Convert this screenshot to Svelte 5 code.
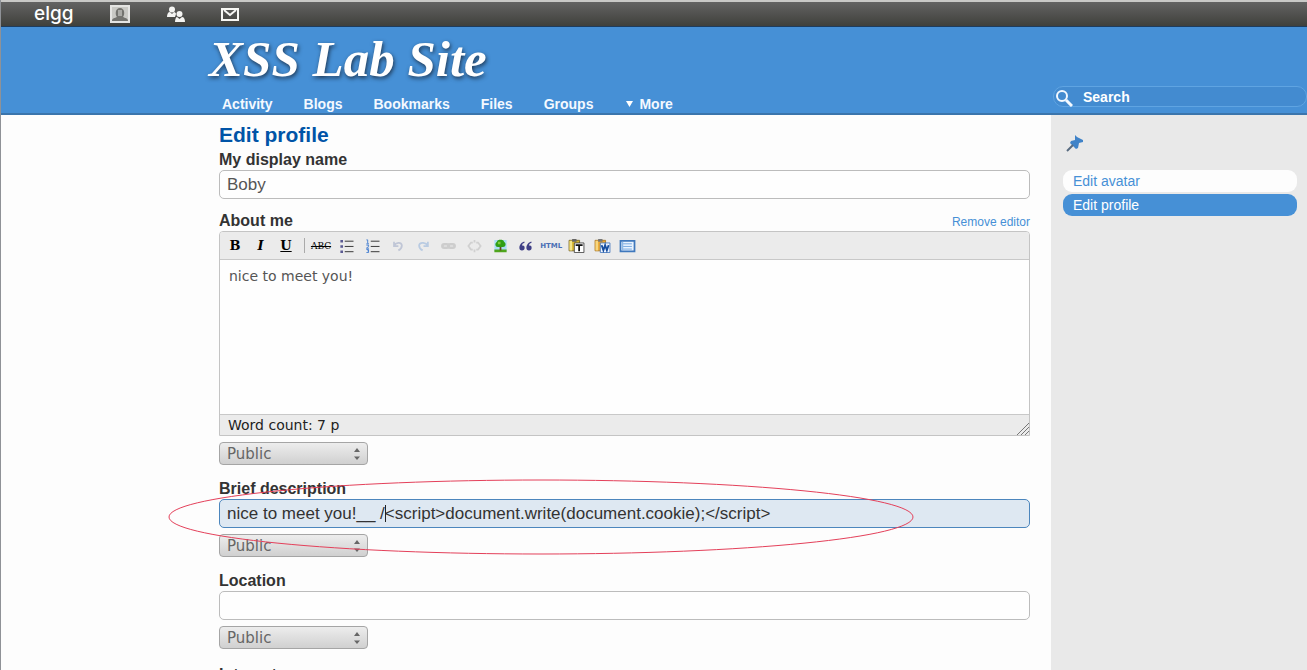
<script>
  const nav = ['Activity', 'Blogs', 'Bookmarks', 'Files', 'Groups'];
</script>

{#snippet publicSelect(id)}
  <div class="access">
    <select {id} aria-label="Access level"><option>Public</option></select>
    <svg class="arrows" viewBox="0 0 8 14" aria-hidden="true"><path d="M4 1 7 5H1zM4 13 1 9.500H7z" /></svg>
  </div>
{/snippet}

<div class="page">
  <div class="topbar">
    <a class="logo" href="#home">elgg</a>
    <a href="#profile" aria-label="Profile">
      <svg width="20" height="18" viewBox="0 0 20 18"><path fill="#e4e4e2" d="M0 0h20v18H0z" /><path fill="#c9c9c5" d="M2 2h16v14H2z" /><path fill="#73736f" d="M2 16c0-3 3-3 5-4-2-2-2-9 3-9s5 7 3 9c2 1 5 1 5 4z" /><path fill="#aaaaa6" d="M8 5h4v6H8z" /></svg>
    </a>
    <a href="#friends" aria-label="Friends">
      <svg width="19" height="17" viewBox="0 0 19 17" fill="#f4f4f2"><circle cx="6" cy="3.500" r="3" /><path d="M1 11c0-3 1-5 3-5l2 2 2-2c1 0 2 1 2 2l-1 3z" /><circle cx="13.500" cy="8" r="3" /><path d="M9 16c0-3 1-5 2-5l2.500 2 2.500-2c2 0 3 2 3 5z" /></svg>
    </a>
    <a href="#messages" aria-label="Messages">
      <svg width="18" height="13" viewBox="0 0 18 13" fill="none" stroke="#f7f7f4" stroke-width="2"><path d="M1 1h16v11H1z" /><path d="m3 2 6 5 6-5" /></svg>
    </a>
  </div>

  <header>
    <div class="brand">
      <h1><a href="#site">XSS Lab Site</a></h1>
      <nav>
        {#each nav as item}<a href="#{item}">{item}</a>{/each}
        <a class="more" href="#more"><svg width="7" height="6" viewBox="0 0 7 6"><path fill="#fff" d="M0 0h7L3.500 6z" /></svg>More</a>
      </nav>
    </div>
    <form class="search">
      <svg width="18" height="18" viewBox="0 0 18 18" fill="none" stroke="#f3f9ff" aria-hidden="true"><circle cx="7" cy="7" r="5" stroke-width="2" /><path stroke-width="3" d="m11 11 6 6" /></svg>
      <input type="text" value="Search" aria-label="Search" />
    </form>
  </header>

  <div class="body">
    <main>
      <h2>Edit profile</h2>

      <div class="field name">
        <label for="name">My display name</label>
        <input id="name" type="text" value="Boby" />
      </div>

      <div class="field">
        <div class="labelrow">
          <label for="about">About me</label>
          <a href="#editor">Remove editor</a>
        </div>
        <div class="editor">
          <div class="toolbar">
            <div class="group marks">
              <button class="b" aria-label="Bold">B</button>
              <button class="i" aria-label="Italic">I</button>
              <button class="u" aria-label="Underline">U</button>
            </div>
            <span class="sep"></span>
            <div class="group tools">
              <button class="abc" aria-label="Strikethrough">ABC</button>
              <button aria-label="Bulleted list"><svg viewBox="0 0 16 16"><path stroke="#222" d="M6 2.500h10M6 8.500h10M6 14.500h10" /><path fill="#5a5a92" d="M1 1h3v3H1zM1 7h3v3H1zM1 13h3v3H1z" /></svg></button>
              <button aria-label="Numbered list"><svg viewBox="0 0 16 16"><path stroke="#222" d="M6 2.500h10M6 8.500h10M6 14.500h10" /><path stroke="#3b78cf" fill="none" d="M1 1h1.500v4M1 5.500h3M1 7h2.500v1.500L1 10.500h3M1 12h2.500v3.500H1M2 13.500h2" /></svg></button>
              <button aria-label="Undo"><svg viewBox="0 0 16 16" fill="none" stroke="#c0c6d6" stroke-width="2"><path d="M4 3v5h5M4 8c2-4 8-5 9-1 0 3-2 5-4 6" /></svg></button>
              <button aria-label="Redo"><svg viewBox="0 0 16 16" fill="none" stroke="#b9cbe2" stroke-width="2"><path d="M13 3v5H8M13 8C11 4 4 3 3 7c0 3 2 5 4 6" /></svg></button>
              <button aria-label="Link"><svg viewBox="0 0 16 16" fill="none" stroke="#cdcdcd" stroke-width="3"><rect x="1" y="6" width="7" height="4" rx="2" /><rect x="8" y="6" width="7" height="4" rx="2" /></svg></button>
              <button aria-label="Unlink"><svg viewBox="0 0 16 16" fill="none" stroke="#d0d0d0" stroke-width="2"><path d="M6 4H4L1 8l3 4h2M10 4h2l3 4-3 4h-2M8 1v3M8 12v3" /></svg></button>
              <button aria-label="Image"><svg viewBox="0 0 16 16"><path fill="#a9dcf5" d="M1 1h14v13H1z" /><path fill="#4fa51c" d="M1 12h14v3H1z" /><path fill="#654a1e" d="M7 8h2v5H7z" /><path fill="#2f9f16" d="M4 3c0-3 8-3 8 0 3 2 2 6-1 6H5C2 9 1 5 4 3z" /><path fill="#7fcc3e" d="M5 3h3v3H5z" /></svg></button>
              <button aria-label="Blockquote"><svg viewBox="0 0 16 16" fill="#3e3e86"><path d="M7 3C4 3 1 6 1 10c0 2 1 3 3 3s3-1 3-3-1-2.500-3-2.500C4 6 5 5 7 4zM15 3c-3 0-6 3-6 7 0 2 1 3 3 3s3-1 3-3-1-2.500-3-2.500C12 6 13 5 15 4z" /></svg></button>
              <button class="html" aria-label="Edit HTML">HTML</button>
              <button aria-label="Paste as text"><svg viewBox="0 0 18 16"><path fill="#d8b72f" stroke="#766426" d="M.5 1.500h12v12H.5z" /><path fill="#f4e58a" d="M1 2h3v11H1z" /><path fill="#666" d="M4 0h5v3H4z" /><path fill="#fff" stroke="#444" d="M6.500 4.500h11v11h-11z" /><path stroke="#111" stroke-width="2" d="M8 7h8M12 7v7" /></svg></button>
              <button aria-label="Paste from Word"><svg viewBox="0 0 18 16"><path fill="#eda72e" stroke="#a97624" d="M.5 1.500h12v12H.5z" /><path fill="#f7d67e" d="M1 2h3v11H1z" /><path fill="#777" d="M4 0h5v3H4z" /><path fill="#eef5ff" stroke="#4577bd" d="M6.500 4.500h11v11h-11z" /><path fill="none" stroke="#174fa0" stroke-width="2" d="m8 7 2 6 2-6 2 6 2-6" /></svg></button>
              <button aria-label="Fullscreen"><svg viewBox="0 0 18 16"><path fill="#e9f3ff" stroke="#3f78bd" stroke-width="2" d="M1 2h16v12H1z" /><path stroke="#6aa1dd" d="M4 5.500h10M4 8.500h10M4 11.500h10M3.500 3v10" /></svg></button>
            </div>
          </div>
          <textarea id="about">nice to meet you!</textarea>
          <div class="status">
            <span>Word count: 7 p</span>
            <svg width="12" height="12" viewBox="0 0 12 12" stroke="#777" aria-hidden="true"><path d="M0 12 12 0M4 12l8-8M8 12l4-4" /></svg>
          </div>
        </div>
        {@render publicSelect('about-access')}
      </div>

      <div class="field circled">
        <label for="brief">Brief description</label>
        <div class="inputwrap">
          <input id="brief" class="focused" type="text" value="nice to meet you!__ /&lt;script&gt;document.write(document.cookie);&lt;/script&gt;" />
          <span class="caret"></span>
        </div>
        {@render publicSelect('brief-access')}
        <svg class="ring" viewBox="0 0 746 76" preserveAspectRatio="none" aria-hidden="true"><ellipse cx="373" cy="38" rx="372" ry="37" /></svg>
      </div>

      <div class="field">
        <label for="location">Location</label>
        <input id="location" type="text" />
        {@render publicSelect('location-access')}
      </div>

      <div class="field interests">
        <label for="interests">Interests</label>
        <input id="interests" type="text" />
      </div>
    </main>

    <aside>
      <a class="pin" href="#bookmark" aria-label="Bookmark this page"><svg width="18" height="17" viewBox="0 0 18 17"><path fill="#4083c8" d="m9 0 2 2 6 3 0 2-4 1-1 5-2 1-3-3-3-3 1-2 4-1z" /><path stroke="#586b80" stroke-width="2" d="m7 10-6 6" /></svg></a>
      <ul>
        <li><a href="#avatar">Edit avatar</a></li>
        <li><a class="current" href="#edit">Edit profile</a></li>
      </ul>
    </aside>
  </div>
</div>

<style>
  .page, .page :global(*) { box-sizing: border-box; }
  .page {
    display: flex;
    flex-direction: column;
    height: 100vh;
    overflow: hidden;
    background: #fdfdfd;
    border-left: 1px solid #8f9297;
    font-family: "Liberation Sans", Arial, sans-serif;
    color: #333;
  }
  a { text-decoration: none; color: #4690d6; }
  svg { display: block; }

  .topbar {
    flex: none;
    display: flex;
    align-items: center;
    height: 27px;
    padding-left: 33px;
    border-top: 2px solid #c9c9c7;
    border-bottom: 1px solid #1f3c5c;
    background: linear-gradient(#636363, #3f403b);
  }
  .topbar a { margin-right: 36px; }
  .topbar .logo { width: 40px; font: 500 19px/24px Inter, sans-serif; color: #fff; }

  header {
    flex: none;
    display: flex;
    justify-content: space-between;
    align-items: flex-end;
    height: 88px;
    background: #4690d6;
    border-bottom: 2px solid #3b75ac;
  }
  .brand { padding-left: 208px; }
  h1 { margin: 0 0 8px; font: italic bold 51px/56px "Liberation Serif", "Times New Roman", serif; }
  h1 a { color: #fff; text-shadow: 1px 2px 4px #1d3550; }
  nav { display: flex; gap: 31px; padding-left: 13px; font-weight: bold; font-size: 14px; line-height: 18px; }
  nav a { color: #f4f9ff; }
  nav .more { display: flex; align-items: center; gap: 6px; padding-left: 2px; }
  .search { position: relative; width: 254px; margin-bottom: 6px; }
  .search svg { position: absolute; left: 2px; top: 3px; }
  .search input {
    display: block;
    width: 100%;
    height: 21px;
    padding: 0 10px 0 29px;
    border: 1px solid #5fa4e2;
    border-radius: 10px;
    background: #438bd0;
    color: #fff;
    font: bold 14px/18px "Liberation Sans", Arial, sans-serif;
  }

  .body { flex: 1; display: flex; min-height: 0; }
  main { flex: 1; padding: 5px 21px 0 218px; }
  aside { width: 256px; padding: 20px 10px 0 12px; background: #e9e9e9; }
  h2 { margin: 0; font-size: 21px; line-height: 30px; color: #0054a7; }

  .field { margin-bottom: 14px; }
  .field.name { margin-bottom: 12px; }
  .field.interests { margin-top: 16px; }
  label { display: block; font-weight: bold; font-size: 16px; line-height: 20px; }
  .field input {
    display: block;
    width: 100%;
    height: 29px;
    padding: 0 7px;
    border: 1px solid #bcbcbc;
    border-radius: 5px;
    background: #fefefe;
    color: #555;
    font: 17px/20px "Liberation Sans", Arial, sans-serif;
  }
  .field input.focused { border-color: #4c86bd; background: #dee8f2; color: #333; }
  .inputwrap { position: relative; }
  .caret { position: absolute; left: 166px; top: 6px; width: 1px; height: 17px; background: #222; }

  .labelrow { display: flex; justify-content: space-between; align-items: flex-end; }
  .labelrow a { font-size: 12px; line-height: 18px; }
  .editor { border: 1px solid #c4c4c4; border-radius: 4px 4px 0 0; background: #fefefe; overflow: hidden; }
  .toolbar {
    display: flex;
    align-items: center;
    height: 28px;
    padding-left: 5px;
    border-bottom: 1px solid #c8c8c8;
    background: #ebebeb;
  }
  .group { display: flex; justify-content: space-between; }
  .marks { width: 71px; }
  .tools { width: 327px; }
  .sep { width: 1px; height: 15px; margin: 0 6px 0 8px; background: #aaa; }
  .toolbar button {
    display: flex;
    align-items: center;
    justify-content: center;
    width: 20px;
    height: 20px;
    padding: 0;
    border: 0;
    background: none;
    color: #000;
    font: bold 13px/20px "DejaVu Serif", serif;
  }
  .toolbar button svg { width: 17px; height: 14px; }
  .toolbar .i { font-style: italic; }
  .toolbar .u { text-decoration: underline; }
  .toolbar .abc { font: 9px/20px "DejaVu Serif", serif; text-decoration: line-through; }
  .toolbar .html { font: bold 7px/20px "DejaVu Sans", sans-serif; color: #4a6fb5; }
  textarea {
    display: block;
    width: 100%;
    height: 154px;
    padding: 8px 9px;
    border: 0;
    resize: none;
    background: transparent;
    color: #555;
    font: 14px/16px "DejaVu Sans", sans-serif;
  }
  .status {
    display: flex;
    justify-content: space-between;
    align-items: flex-end;
    height: 21px;
    padding-left: 8px;
    border-top: 1px solid #c8c8c8;
    background: #ebebeb;
    color: #222;
    font: 14px/20px "DejaVu Sans", sans-serif;
  }

  .access { position: relative; width: 149px; margin-top: 6px; }
  select {
    display: block;
    appearance: none;
    width: 100%;
    height: 23px;
    padding: 0 7px;
    border: 1px solid #a5a5a5;
    border-radius: 4px;
    background: linear-gradient(#ededed, #d0d0d0);
    color: #666;
    font: 15px/20px "DejaVu Sans", sans-serif;
  }
  .arrows { position: absolute; right: 7px; top: 5px; width: 8px; height: 14px; fill: #666; }

  .circled { position: relative; }
  .ring { position: absolute; left: -51px; top: 0; width: 746px; height: 76px; pointer-events: none; }
  .ring ellipse { fill: none; stroke: #e4405a; stroke-width: 1; }

  .pin { display: block; width: 18px; margin: 0 0 18px 3px; }
  ul { margin: 0; padding: 0; list-style: none; display: grid; gap: 2px; }
  li a { display: block; padding: 0 10px; border-radius: 9px; background: #fdfdfd; font-size: 14px; line-height: 22px; }
  li a.current { background: #4690d6; color: #fff; }
</style>
